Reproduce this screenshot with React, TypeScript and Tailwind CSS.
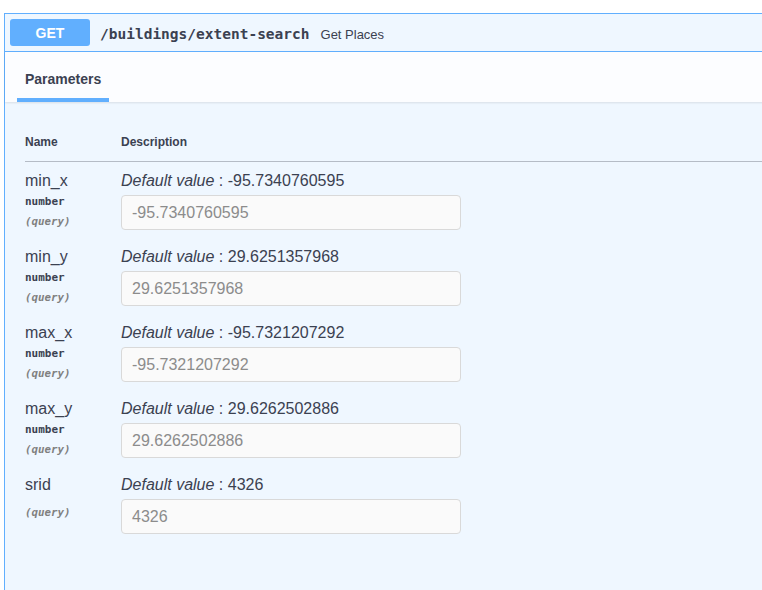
const params = [
  { name: 'min_x', type: 'number', def: '-95.7340760595' },
  { name: 'min_y', type: 'number', def: '29.6251357968' },
  { name: 'max_x', type: 'number', def: '-95.7321207292' },
  { name: 'max_y', type: 'number', def: '29.6262502886' },
  { name: 'srid', type: '', def: '4326' },
];

const sans = "font-['Liberation_Sans',Arial,sans-serif]";
const mono = "font-['DejaVu_Sans_Mono','Liberation_Mono',monospace]";

function ParamRow({ name, type, def }: { name: string; type: string; def: string }) {
  return (
    <div className="flex h-[76px] pt-[10px]">
      <div className="w-[96px] shrink-0">
        <div className="text-[16px] leading-[18px] text-[#3b4151]">{name}</div>
        {type ? (
          <>
            <div className={`${mono} mt-[6px] text-[11px] leading-[12px] font-bold text-[#3b4151]`}>{type}</div>
            <div className={`${mono} mt-[8px] text-[10.8px] leading-[12px] font-bold italic text-[#808080]`}>(query)</div>
          </>
        ) : (
          <div className={`${mono} mt-[13px] text-[10.8px] leading-[12px] font-bold italic text-[#808080]`}>(query)</div>
        )}
      </div>
      <div className="flex flex-col">
        <div className="text-[16px] leading-[18px] text-[#3b4151]">
          <i>Default value</i> : {def}
        </div>
        <input
          className="mt-[5px] h-[35px] w-[340px] rounded-[4px] border border-[#d9d9d9] bg-[#fafafa] px-[10px] text-[16px] outline-none placeholder:text-[#8c8c8c]"
          placeholder={def}
        />
      </div>
    </div>
  );
}

export default function App() {
  return (
    <div className={`${sans} min-h-screen overflow-hidden bg-white pt-[13px] pl-[4px]`}>
      <div className="h-[600px] w-[800px] border border-[#61affe] bg-[#eff7ff]">
        <div className="flex h-[38px] items-start border-b border-[#61affe] px-[5px] pt-[5px]">
          <div className="flex h-[27px] w-[80px] items-center justify-center rounded-[3px] bg-[#61affe] pt-[1px] text-[14px] font-bold text-white">
            GET
          </div>
          <span className={`${mono} ml-[10px] self-center text-[14.5px] font-bold text-[#3b4151]`}>
            /buildings/extent-search
          </span>
          <span className="ml-[11px] self-center text-[13px] text-[#3b4151]">Get Places</span>
        </div>

        <div className="flex h-[50px] items-end bg-[#fcfdff] pl-[12px] shadow-[0_1px_2px_rgba(0,0,0,0.1)]">
          <div className="flex flex-col">
            <div className="px-[8px] text-[14px] leading-[17px] font-bold text-[#3b4151]">Parameters</div>
            <div className="mt-[10px] h-[4px] bg-[#61affe]" />
          </div>
        </div>

        <div className="pl-[20px] pt-[22px]">
          <div className="flex h-[38px] items-center border-b border-[#b5bcc6] pb-[2px] text-[12px] font-bold text-[#3b4151]">
            <div className="w-[96px]">Name</div>
            <div>Description</div>
          </div>
          {params.map((p) => (
            <ParamRow key={p.name} {...p} />
          ))}
        </div>
      </div>
    </div>
  );
}
